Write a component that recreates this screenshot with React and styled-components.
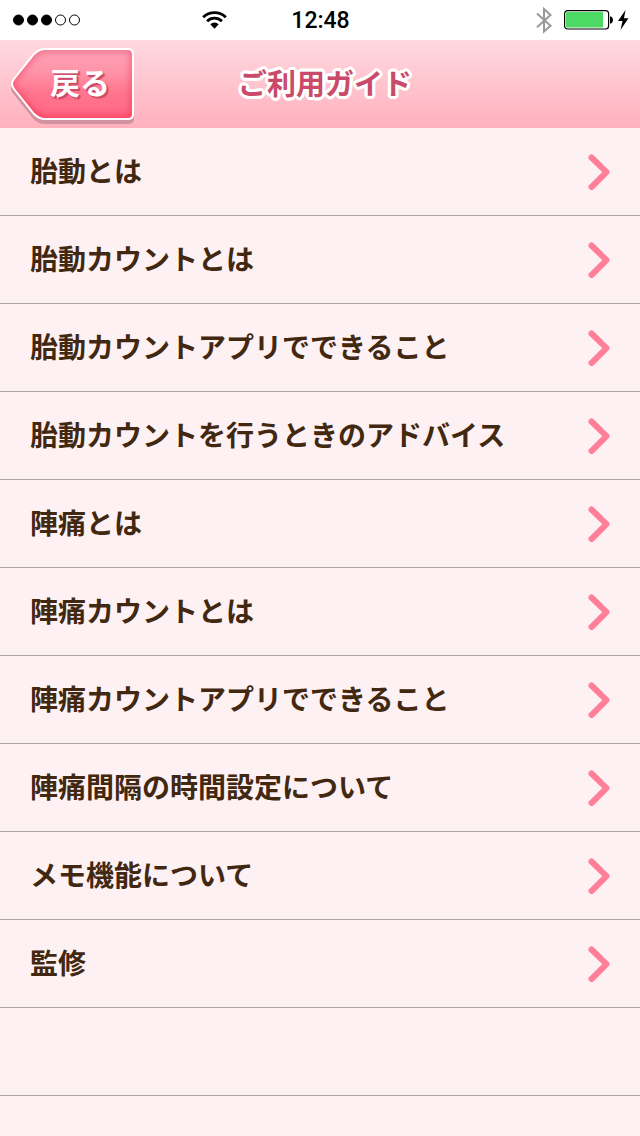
import styled, { createGlobalStyle } from "styled-components";

const GlobalStyle = createGlobalStyle`
    * {
        box-sizing: border-box;
    }
    body {
        margin: 0;
        background: #fef1f3;
        font-family: "Noto Sans CJK JP", sans-serif;
    }
`;

const Container = styled.div`
    min-height: 100vh;
`;

const StatusBar = styled.div`
    display: grid;
    grid-template-columns: 1fr auto 1fr;
    align-items: center;
    height: 40px;
    padding: 0 11px 0 12px;
    background: #fff;
`;

const StatusLeft = styled.div`
    display: flex;
    align-items: center;
    gap: 121px;
`;

const StatusRight = styled.div`
    display: flex;
    align-items: center;
    justify-content: flex-end;
`;

const Icon = styled.svg`
    display: block;
    flex: none;
    margin-right: ${(props) => props.$space || 0}px;
`;

const Time = styled.time`
    padding-top: 2px;
    color: #000;
    font-family: Roboto, sans-serif;
    font-size: 23px;
    font-weight: 500;
    line-height: 38px;
`;

const Header = styled.header`
    display: grid;
    grid-template-columns: 1fr auto 1fr;
    align-items: center;
    height: 88px;
    padding-left: 10px;
    background: linear-gradient(#ffd9e0, #ffb0bd);
`;

const BackButton = styled.button`
    display: grid;
    justify-self: start;
    align-items: center;
    padding: 0;
    border: none;
    background: none;
    cursor: pointer;

    > * {
        grid-area: 1 / 1;
    }
`;

const BackText = styled.span`
    padding: 0 0 6px 40px;
    color: #fff;
    font-family: "Noto Sans CJK JP", sans-serif;
    font-size: 30px;
    font-weight: 700;
    line-height: 40px;
    text-align: left;
    text-shadow: 1px 1px 0 #cc4a66, 2px 2px 1px #cc4a66;
`;

const Title = styled.h1`
    margin: 0;
    padding-bottom: 4px;
    color: #c94a69;
    font-size: 29px;
    font-weight: 700;
    line-height: 40px;
    text-shadow:
        3px 0 0 #fff, -3px 0 0 #fff, 0 3px 0 #fff, 0 -3px 0 #fff,
        2px 2px 0 #fff, -2px 2px 0 #fff, 2px -2px 0 #fff, -2px -2px 0 #fff,
        3px 1px 0 #fff, -3px 1px 0 #fff, 3px -1px 0 #fff, -3px -1px 0 #fff,
        1px 3px 0 #fff, -1px 3px 0 #fff, 1px -3px 0 #fff, -1px -3px 0 #fff;
`;

const List = styled.ul`
    margin: 0;
    padding: 0;
    list-style: none;
`;

const Item = styled.li`
    height: 88px;
    border-bottom: 1px solid #aca5a6;
`;

const ItemLink = styled.a`
    display: flex;
    align-items: center;
    justify-content: space-between;
    height: 100%;
    padding: 0 29px 0 30px;
    color: #422810;
    text-decoration: none;
`;

const ItemText = styled.span`
    padding-bottom: 4px;
    font-size: 28px;
    font-weight: 700;
    line-height: 40px;
`;

const guides = [
    "胎動とは",
    "胎動カウントとは",
    "胎動カウントアプリでできること",
    "胎動カウントを行うときのアドバイス",
    "陣痛とは",
    "陣痛カウントとは",
    "陣痛カウントアプリでできること",
    "陣痛間隔の時間設定について",
    "メモ機能について",
    "監修",
];

const Signal = () => (
    <Icon width="69" height="12" viewBox="0 0 69 12" stroke="#000">
        {[0, 1, 2, 3, 4].map((i) => (
            <circle key={i} cx={6.5 + i * 14} cy="6" r="5" fill={i < 3 ? "#000" : "none"} />
        ))}
    </Icon>
);

const Wifi = () => (
    <Icon width="25" height="18" viewBox="0 0 25 18">
        <g fill="none" stroke="#000" strokeWidth="2.8">
            <path d="M1.2 6.2a16.2 16.2 0 0 1 22.6 0" />
            <path d="M5.1 10.2a10.6 10.6 0 0 1 14.8 0" />
        </g>
        <path d="M8.3 13.2a6 6 0 0 1 8.4 0L12.5 17.8z" />
    </Icon>
);

const Bluetooth = () => (
    <Icon $space={12} width="16" height="28" viewBox="0 0 16 28" fill="none" stroke="#999" strokeWidth="2">
        <path d="M1 7.5L14.5 19.7L8 25.6V3L14.5 9L1 21.2" />
    </Icon>
);

const Battery = () => (
    <Icon $space={4} width="50" height="20" viewBox="0 0 50 20">
        <rect x="0.6" y="0.6" width="44" height="18.4" rx="3" fill="#fff" stroke="#000" strokeWidth="1.2" />
        <rect x="2" y="2" width="37" height="15.5" rx="1" fill="#4cd964" />
        <path d="M46 6.5h1.2q1.8 1 1.8 3.5t-1.8 3.5H46z" />
    </Icon>
);

const Bolt = () => (
    <Icon width="11" height="20" viewBox="0 0 11 20">
        <path d="M7.5 0L0 11h4.5L2.5 20 10.5 8.3H6z" />
    </Icon>
);

const BackShape = () => (
    <Icon width="126" height="80" viewBox="0 0 126 80" aria-hidden="true">
        <defs>
            <linearGradient id="backFill" x1="0" y1="0" x2="0" y2="1">
                <stop offset="0" stopColor="#ffa0b4" />
                <stop offset="0.3" stopColor="#ff96aa" />
                <stop offset="0.65" stopColor="#ff738c" />
                <stop offset="1" stopColor="#ff6883" />
            </linearGradient>
            <linearGradient id="backEdge" x1="0" y1="0" x2="0" y2="1">
                <stop offset="0" stopColor="#f0758f" />
                <stop offset="1" stopColor="#ff3f5e" />
            </linearGradient>
            <filter id="backBlur" x="-20%" y="-20%" width="140%" height="140%">
                <feGaussianBlur stdDeviation="3" />
            </filter>
            <path
                id="backPath"
                d="M35 5H118Q123 5 123 10V70Q123 75 118 75H35Q29 75 24 70L4 45Q0 40 4 35L24 10Q29 5 35 5Z"
            />
            <clipPath id="backClip">
                <use href="#backPath" />
            </clipPath>
        </defs>
        <use href="#backPath" y="4" fill="#d0929e" stroke="#d0929e" strokeWidth="2" />
        <use href="#backPath" fill="url(#backFill)" />
        <g clipPath="url(#backClip)">
            <use href="#backPath" fill="none" stroke="url(#backEdge)" strokeWidth="7" filter="url(#backBlur)" />
        </g>
        <use href="#backPath" fill="none" stroke="#fff" strokeWidth="2" />
    </Icon>
);

const Chevron = () => (
    <Icon width="24" height="40" viewBox="0 0 24 40" fill="none" stroke="#ff7f98" aria-hidden="true">
        <path d="M4.5 5.5L19.5 20.2L4.5 35" strokeWidth="6" strokeLinecap="round" strokeLinejoin="round" />
    </Icon>
);

const App = () => {
    return (
        <Container lang="ja">
            <GlobalStyle />
            <StatusBar>
                <StatusLeft>
                    <Signal />
                    <Wifi />
                </StatusLeft>
                <Time>12:48</Time>
                <StatusRight>
                    <Bluetooth />
                    <Battery />
                    <Bolt />
                </StatusRight>
            </StatusBar>
            <Header>
                <BackButton type="button">
                    <BackShape />
                    <BackText>戻る</BackText>
                </BackButton>
                <Title>ご利用ガイド</Title>
            </Header>
            <List>
                {guides.map((guide) => (
                    <Item key={guide}>
                        <ItemLink href="#">
                            <ItemText>{guide}</ItemText>
                            <Chevron />
                        </ItemLink>
                    </Item>
                ))}
                {/* blank row under the last guide */}
                <Item aria-hidden="true" />
            </List>
        </Container>
    );
};

export default App;
